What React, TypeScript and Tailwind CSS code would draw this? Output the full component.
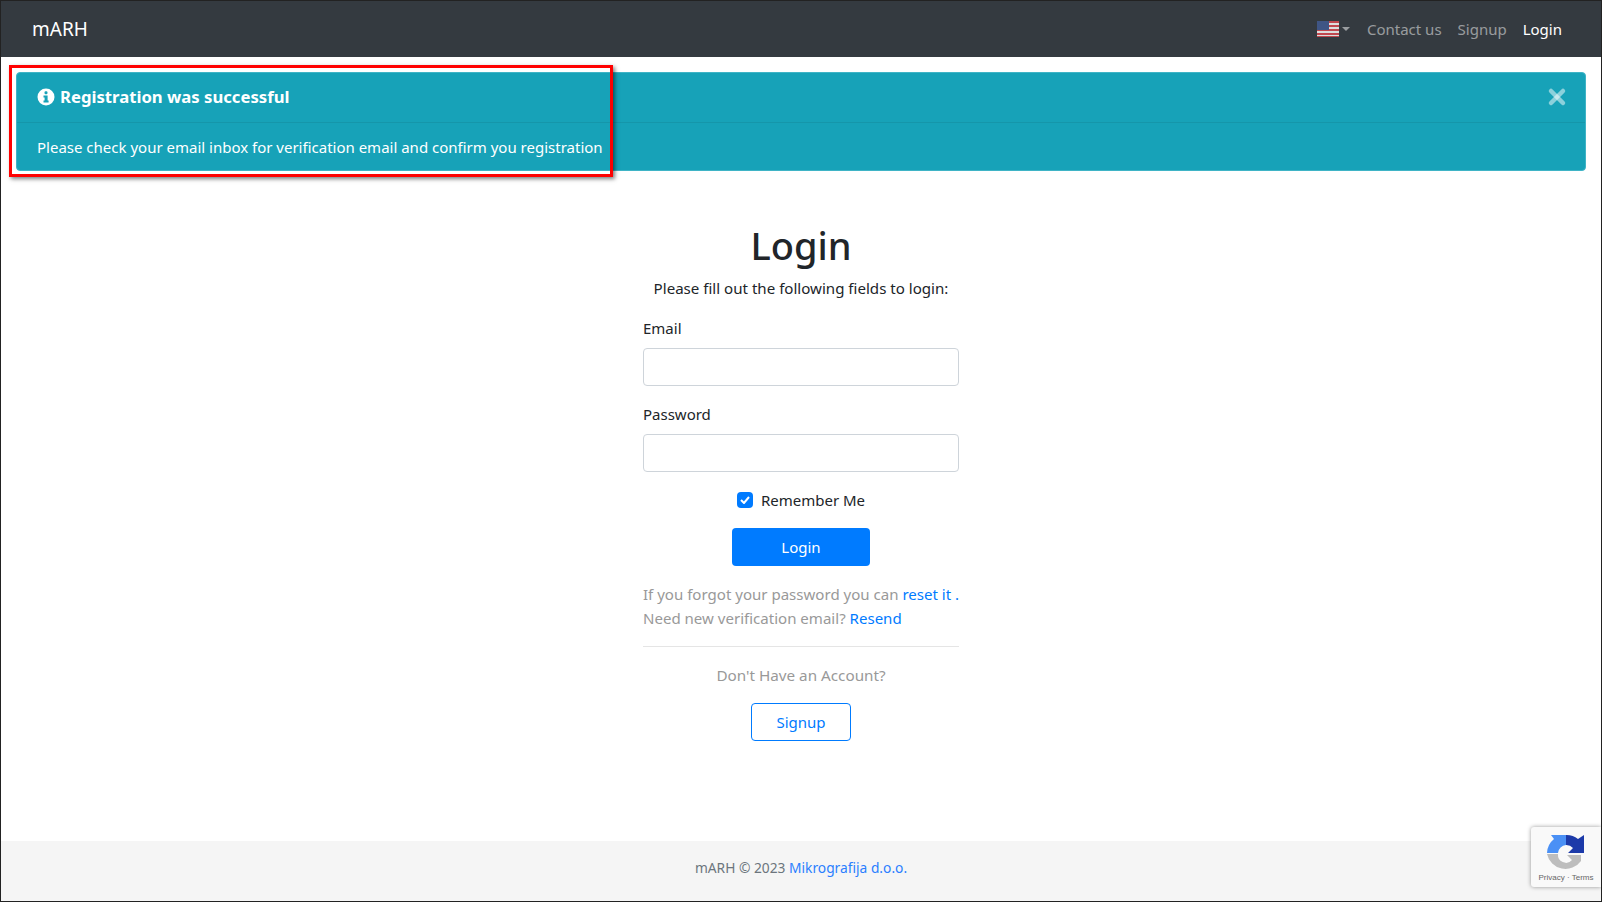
import { X } from 'lucide-react'

const font = "font-['Noto_Sans',sans-serif]"

function Flag() {
  return (
    <svg width="22" height="16" viewBox="0 0 22 16">
      <rect width="22" height="16" fill="#ddd" />
      <rect y="0" width="22" height="2" fill="#c0474f" />
      <rect y="4" width="22" height="2" fill="#c0474f" />
      <rect y="8" width="22" height="2" fill="#c0474f" />
      <rect y="12" width="22" height="2" fill="#c0474f" />
      <rect y="15" width="22" height="1" fill="#c0474f" />
      <rect width="12" height="9" fill="#3f5585" />
    </svg>
  )
}

function Recaptcha() {
  return (
    <div className="absolute right-0 bottom-[14px] w-[70px] h-[60px] bg-[#f9f9f9] rounded-l-[3px] shadow-[0_0_4px_rgba(0,0,0,0.4)] flex flex-col items-center pt-[7px]">
      <svg width="38" height="38" viewBox="0 0 38 38">
        <path d="M0 19 A19 19 0 0 1 7 5 L4 1 L19 1 L19 11 A9 9 0 0 0 11 19 Z" fill="#4a90f5" />
        <path d="M19 1 A18 18 0 0 1 31 5 L37 1 L37 19 L21 19 L26 14 A9 9 0 0 0 19 11 Z" fill="#1c3aa9" />
        <path d="M0 20 H11 A8 8 0 0 0 25 26 L20 21 H34 V27 A19 19 0 0 1 0 20 Z" fill="#bdbdbd" />
      </svg>
      <span className="text-[8px] leading-[10px] text-[#666] mt-[1px] whitespace-nowrap font-['Liberation_Sans',sans-serif]">Privacy · Terms</span>
    </div>
  )
}

export default function App() {
  return (
    <div className={`relative h-[902px] w-[1602px] overflow-hidden border border-[#222] bg-white text-[#212529] text-[15px] flex flex-col ${font}`}>
      <nav className="h-[56px] shrink-0 bg-[#343a40] flex items-center justify-between pl-[31px] pr-[39px]">
        <a className="text-[19px] text-white">mARH</a>
        <div className="flex items-center gap-4 text-[15px] text-white/50">
          <div className="flex items-center gap-[3px] mr-[1px]">
            <Flag />
            <span className="w-0 h-0 border-x-[4px] border-x-transparent border-t-[4px] border-t-white/50" />
          </div>
          <a>Contact us</a>
          <a>Signup</a>
          <a className="text-white">Login</a>
        </div>
      </nav>

      <main className="flex-1 flex flex-col">
        <div className="mt-[15px] ml-[15px] mr-[15px] h-[99px] rounded-[4px] bg-[#17a2b8] text-white border border-[#3fb4c6] relative">
          <div className="h-[50px] flex items-center pl-[20px] pb-[2px] gap-[5px] border-b border-[#1596aa] font-bold text-[16.7px]">
            <svg width="18" height="18" viewBox="0 0 18 18">
              <circle cx="9" cy="9" r="8.5" fill="#fff" />
              <rect x="7.5" y="3.2" width="3" height="3" rx="1.2" fill="#17a2b8" />
              <path d="M6.5 7.6 H10.6 V12.6 H11.6 V14.6 H6.5 V12.6 H7.6 V9.6 H6.5 Z" fill="#17a2b8" />
            </svg>
            Registration was successful
          </div>
          <div className="h-[47px] flex items-center pl-[20px] pt-[2px]">
            Please check your email inbox for verification email and confirm you registration
          </div>
          <button className="absolute right-[16px] top-[12px] text-white/50">
            <X className="w-[24px] h-[24px]" strokeWidth={4.5} />
          </button>
        </div>

        <div className="w-[316px] mx-auto mt-[50px] flex flex-col">
          <h1 className="text-[38px] leading-[48px] font-medium text-center">Login</h1>
          <p className="text-center mt-[7px] leading-[24px] text-[15.1px]">Please fill out the following fields to login:</p>
          <label className="mt-[16px] leading-[24px]">Email</label>
          <input className="mt-[8px] h-[38px] border border-[#ced4da] rounded-[4px]" />
          <label className="mt-[16px] leading-[24px]">Password</label>
          <input className="mt-[8px] h-[38px] border border-[#ced4da] rounded-[4px]" />
          <div className="mt-[16px] h-[24px] flex items-center justify-center gap-[8px]">
            <span className="w-4 h-4 rounded-[4px] bg-[#007bff] flex items-center justify-center">
              <svg width="10" height="8" viewBox="0 0 10 8">
                <path d="M1 4 L4 7 L9 1" fill="none" stroke="#fff" strokeWidth="2" />
              </svg>
            </span>
            Remember Me
          </div>
          <button className="self-center mt-[16px] w-[138px] h-[38px] rounded-[4px] bg-[#007bff] text-white">Login</button>
          <p className="mt-[16px] leading-[24px] text-[#999] text-[15.05px] whitespace-nowrap">
            If you forgot your password you can <a className="text-[#007bff]">reset it</a> <a className="text-[#007bff]">.</a>
            <br />
            Need new verification email? <a className="text-[#007bff]">Resend</a>
          </p>
          <hr className="mt-[16px] border-[#e5e5e5]" />
          <p className="mt-[16px] leading-[24px] text-center text-[#999] text-[15.25px]">Don't Have an Account?</p>
          <button className="self-center mt-[16px] w-[100px] h-[38px] rounded-[4px] border border-[#007bff] text-[#007bff]">Signup</button>
        </div>
      </main>

      <footer className="h-[60px] shrink-0 bg-[#f5f5f5] flex justify-center pt-[15px] text-[13.77px] leading-[24px] text-[#6c757d]">
        <span>mARH © 2023 <a className="text-[#2a7fff]">Mikrografija d.o.o.</a></span>
      </footer>

      <Recaptcha />

      {/* annotation round the alert */}
      <div className="absolute left-[8px] top-[64px] w-[604px] h-[112px] border-[3px] border-[#f00] shadow-[2px_2px_4px_rgba(0,0,0,0.5)]" />
    </div>
  )
}
